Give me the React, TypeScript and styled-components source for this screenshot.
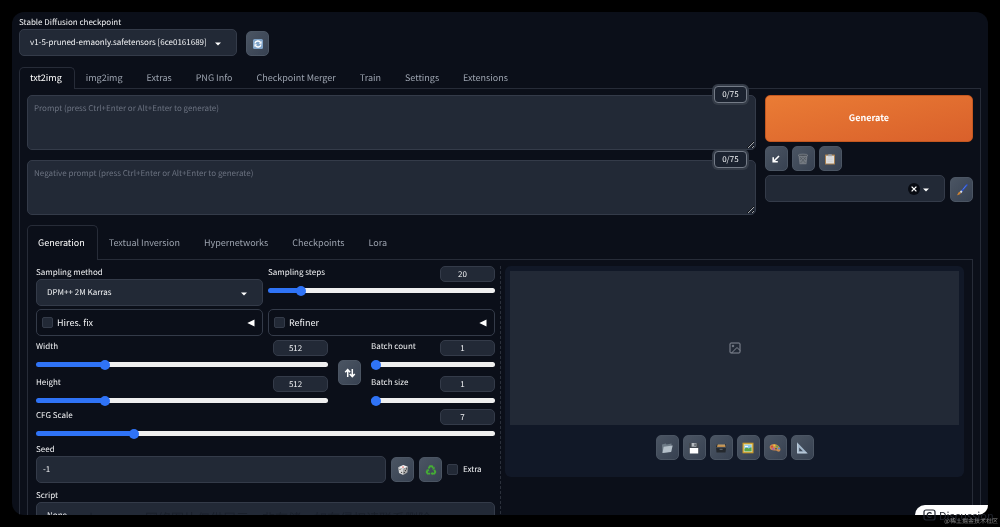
import React from "react";
import styled, { createGlobalStyle } from "styled-components";

const Global = createGlobalStyle`
  * { box-sizing: border-box; }
  html, body { margin: 0; background: #000; text-rendering: geometricPrecision; }
  body, button, input, textarea, select {
    font-family: "Noto Sans CJK SC", "Source Sans Pro", sans-serif;
    text-rendering: geometricPrecision;
    color: #f3f4f6;
  }
  h1, h2, p { margin: 0; }
`;

const line = "#272c38";
const field = "#222936";
const edge = "#343b49";

const Screen = styled.div`
  height: 100vh;
  padding: 12px;
  position: relative;
  overflow: hidden;
`;
const Win = styled.main`
  height: 100%;
  background: #0b0f19;
  border-radius: 12px;
  overflow: hidden;
  padding: 4px 7px 0;
`;
const Label = styled.label`
  display: block;
  font-size: 8px;
  line-height: 13px;
  white-space: nowrap;
`;
const Row = styled.div<{ $gap?: number; $align?: string; $top?: number }>`
  display: flex;
  gap: ${(p) => p.$gap ?? 5}px;
  align-items: ${(p) => p.$align ?? "flex-start"};
  margin-top: ${(p) => p.$top ?? 0}px;
`;
const Grow = styled.div`
  flex: 1;
  min-width: 0;
`;
const SelectBox = styled.div<{ $width?: number }>`
  position: relative;
  width: ${(p) => (p.$width ? `${p.$width}px` : "100%")};
  select {
    appearance: none;
    display: block;
    width: 100%;
    height: 27px;
    padding: 0 20px 0 10px;
    font-size: 8px;
    background: ${field};
    border: 1px solid ${edge};
    border-radius: 5px;
  }
`;
const Caret = styled.svg`
  position: absolute;
  right: 16px;
  top: 13px;
  width: 6px;
  height: 4px;
  fill: #fff;
  pointer-events: none;
`;
const Tool = styled.button`
  flex: none;
  width: 23px;
  height: 25px;
  padding: 0;
  display: grid;
  place-items: center;
  border: 1px solid #4b5563;
  border-radius: 5px;
  background: linear-gradient(to bottom right, #4b5563, #374151);
  svg { width: 12px; height: 12px; display: block; }
`;
const Tabs = styled.nav<{ $top: number }>`
  display: flex;
  margin-top: ${(p) => p.$top}px;
`;
const Tab = styled.button<{ $on?: boolean; $tall?: boolean }>`
  height: ${(p) => (p.$tall ? 35 : 22)}px;
  margin-bottom: -1px;
  padding: 0 12px ${(p) => (p.$tall ? 0 : 2)}px 10px;
  font-size: 9px;
  line-height: 14px;
  white-space: nowrap;
  position: relative;
  color: ${(p) => (p.$on ? "#fff" : "#9ca3af")};
  background: ${(p) => (p.$on ? "#0b0f19" : "transparent")};
  border: 1px solid ${(p) => (p.$on ? line : "transparent")};
  border-bottom: 0;
  border-radius: 5px 5px 0 0;
`;
const Panel = styled.section<{ $inner?: boolean }>`
  border: 1px solid ${line};
  padding: 6px ${(p) => (p.$inner ? 8 : 7)}px 40px;
`;
const PromptWrap = styled.div`
  position: relative;
  textarea {
    display: block;
    width: 100%;
    height: 55px;
    padding: 6px;
    font-size: 8px;
    line-height: 13px;
    background: ${field};
    border: 1px solid ${edge};
    border-radius: 5px;
  }
  textarea::placeholder { color: #6b7280; }
  & + & { margin-top: 10px; }
`;
const Counter = styled.span`
  position: absolute;
  top: -9px;
  right: 9px;
  width: 33px;
  height: 17px;
  font-size: 8px;
  line-height: 15px;
  text-align: center;
  background: #1b222f;
  border: 1px solid #747b87;
  border-radius: 4px;
  box-shadow: 0 0 0 2px #343b47;
`;
const Side = styled.div`
  width: 22%;
  flex: none;
`;
const Generate = styled.button`
  display: block;
  width: 100%;
  height: 47px;
  padding: 0 0 2px;
  font-size: 9px;
  font-weight: 700;
  color: #fff;
  border: 1px solid #c4571f;
  border-radius: 5px;
  background: linear-gradient(to bottom right, #ea7c35, #d9602b);
`;
const Clear = styled.button`
  position: absolute;
  right: 25px;
  top: 8px;
  width: 12px;
  height: 12px;
  padding: 0;
  border: 0;
  border-radius: 50%;
  background: #080b12;
  svg { display: block; width: 12px; height: 12px; }
`;
const Columns = styled.div`
  display: grid;
  grid-template-columns: 1fr 10px 1fr;
`;
const Split = styled.div`
  width: 1px;
  margin-left: 5px;
  border-left: 1px dashed #2b303b;
`;
const Half = styled.div`
  display: grid;
  grid-template-columns: 1fr 1fr;
  gap: 3px 5px;
`;
const Fold = styled.div`
  display: flex;
  align-items: center;
  height: 27px;
  padding: 0 7px 0 5px;
  border: 1px solid ${edge};
  border-radius: 5px;
  label { flex: 1; font-size: 9px; line-height: 14px; margin-left: 4px; }
  svg { width: 8px; height: 8px; fill: #fff; }
`;
const Check = styled.input.attrs({ type: "checkbox" })`
  appearance: none;
  flex: none;
  width: 11px;
  height: 11px;
  margin: 0;
  background: ${field};
  border: 1px solid ${edge};
  border-radius: 2px;
`;
const SliderBox = styled.div`
  height: 29px;
`;
const Stack = styled.div`
  display: flex;
  flex-direction: column;
  gap: 7px;
`;
const SliderHead = styled.div`
  display: flex;
  justify-content: space-between;
  height: 19px;
`;
const NumberBox = styled.input`
  width: 55px;
  height: 16px;
  padding: 0 10px 0 0;
  text-align: center;
  font-size: 8px;
  line-height: 14px;
  background: ${field};
  border: 1px solid ${edge};
  border-radius: 5px;
`;
const Range = styled.input.attrs({ type: "range" })<{ $fill: string }>`
  appearance: none;
  display: block;
  width: 100%;
  height: 10px;
  margin: 0;
  background: transparent;
  &::-webkit-slider-runnable-track {
    height: 5px;
    border-radius: 3px;
    background: linear-gradient(to right, #2f73f6 ${(p) => p.$fill}, #efefef ${(p) => p.$fill});
  }
  &::-webkit-slider-thumb {
    appearance: none;
    width: 10px;
    height: 10px;
    margin-top: -2px;
    border-radius: 50%;
    background: #2f73f6;
  }
`;
const SeedInput = styled.input`
  display: block;
  flex: 1;
  min-width: 0;
  height: 27px;
  padding: 0 6px;
  font-size: 8px;
  background: ${field};
  border: 1px solid ${edge};
  border-radius: 5px;
`;
const BatchCol = styled(Stack)`
  width: 27%;
  flex: none;
`;
const SizeCol = styled(Stack)`
  flex: 1;
  min-width: 0;
`;
const Spaced = styled.div<{ $top: number }>`
  margin-top: ${(p) => p.$top}px;
`;
const Extra = styled(Label)`
  width: 32px;
`;
const Gallery = styled.div`
  height: 211px;
  padding: 5px;
  background: #111827;
  border-radius: 6px;
`;
const Preview = styled.div`
  height: 154px;
  display: grid;
  place-items: center;
  background: ${field};
  svg { width: 12px; height: 12px; stroke: #858b96; fill: none; }
`;
const Actions = styled.div`
  display: flex;
  justify-content: center;
  gap: 4px;
  margin-top: 10px;
`;
const Discuss = styled.a`
  position: absolute;
  right: 12px;
  bottom: 12px;
  width: 73px;
  height: 10px;
  padding: 4px 0 0 8px;
  display: flex;
  gap: 3px;
  background: #fff;
  border-radius: 12px 0 12px 0;
  color: #20242e;
  font-size: 11px;
  line-height: 14px;
  text-decoration: none;
  svg { width: 13px; height: 12px; flex: none; }
`;
const Notice = styled.p`
  position: absolute;
  left: 50px;
  bottom: 0;
  font-size: 13px;
  line-height: 18px;
  white-space: nowrap;
  color: #1a202b;
  mix-blend-mode: darken;
`;
const Credit = styled.p`
  position: absolute;
  right: 2px;
  bottom: 2px;
  font-size: 6px;
  line-height: 9px;
  color: #8d8d8d;
`;

function Drop({ id, options, width }: { id: string; options: string[]; width?: number }) {
  return (
    <SelectBox $width={width}>
      <select id={id}>
        {options.map((o) => <option key={o}>{o}</option>)}
      </select>
      <Caret viewBox="0 0 6 4"><path d="M0 .5h6L3 3.5z" /></Caret>
    </SelectBox>
  );
}

function Slider({ id, label, value, min, max }: { id: string; label: string; value: number; min: number; max: number }) {
  const r = (value - min) / (max - min);
  return (
    <SliderBox>
      <SliderHead>
        <Label htmlFor={id}>{label}</Label>
        <NumberBox aria-label={`${label} value`} defaultValue={value} />
      </SliderHead>
      <Range id={id} min={min} max={max} defaultValue={value} $fill={`calc(5px + (100% - 10px) * ${r})`} />
    </SliderBox>
  );
}

const Refresh = () => (
  <svg viewBox="0 0 12 12"><rect x="1" y="1" width="10" height="10" rx="1.5" fill="#7fa3c8" /><path d="M3 5.5A3 3 0 0 1 8.6 4.6M9 6.5A3 3 0 0 1 3.4 7.4" stroke="#fff" strokeWidth="1.4" fill="none" /><path d="M9.6 3v2.8H6.9zM2.4 9V6.2h2.7z" fill="#fff" /></svg>
);
const ArrowDL = () => (
  <svg viewBox="0 0 12 12"><path d="M9 3 3.5 8.5M3.2 4.2v4.6h4.6" stroke="#fff" strokeWidth="1.6" fill="none" /></svg>
);
const Trash = () => (
  <svg viewBox="0 0 12 12"><path d="M1.500 2.500h9L9.500 11.300h-7z" fill="#737981" /><path d="M3 4l5.5 6M5.5 3l3.5 4M9 4l-5.5 6M6.5 3L3 7" stroke="#4a5058" strokeWidth=".6" /><ellipse cx="6" cy="2.3" rx="4.8" ry="1.200" fill="#4a5058" stroke="#8a9098" strokeWidth=".6" /></svg>
);
const Clip = () => (
  <svg viewBox="0 0 12 12"><rect x="1" y="1.500" width="10" height="10" rx=".6" fill="#a88050" /><path d="M2 2.700h8v7.800H2z" fill="#dedede" /><path d="M3.5 5h5M3.5 6.7h5M3.5 8.4h5" stroke="#c4c7ca" strokeWidth=".5" /><path d="M4 1.5h1.2a.9.9 0 0 1 1.6 0H8v1.7H4z" fill="#9ba1a8" /></svg>
);
const Brush = () => (
  <svg viewBox="0 0 12 12"><path d="M10.8 1 5.2 7.8" stroke="#2b4fc4" strokeWidth="1.8" strokeLinecap="round" /><path d="M10.3 1.3 6.8 5.5" stroke="#6f93ee" strokeWidth=".6" /><path d="M5.8 7 4.4 8.6" stroke="#d8dce2" strokeWidth="1.9" /><path d="M3.7 7.8 4.9 9C4.4 10.5 2.7 11 1 11.2c.9-1.200 1-3 2.700-3.400z" fill="#c98235" /></svg>
);
const Swap = () => (
  <svg viewBox="0 0 12 12"><path d="M3.7 10V3M1.2 5.200l2.500-2.700L6.200 5.200M8.300 2v7M5.800 6.900l2.500 2.700 2.500-2.700" stroke="#fff" strokeWidth="1.500" fill="none" /></svg>
);
const Dice = () => (
  <svg viewBox="0 0 12 12"><path d="M1.200 3.200 6.200 1l4.800 1.800L6 5z" fill="#f4f4f4" /><path d="M1.200 3.200 6 5l.2 6-4.200-2z" fill="#d6d6d6" /><path d="M11 2.800 6 5l.2 6 4.200-2.400z" fill="#a9a9a9" /><ellipse cx="6" cy="3" rx="1.100" ry=".6" fill="#d44" /><circle cx="3" cy="5.500" r=".6" fill="#444" /><circle cx="4.600" cy="8.400" r=".6" fill="#444" /><circle cx="9.600" cy="4.800" r=".6" fill="#222" /><circle cx="8.400" cy="6.600" r=".6" fill="#222" /><circle cx="7.300" cy="8.600" r=".6" fill="#222" /></svg>
);
const Recycle = () => (
  <svg viewBox="0 0 12 12" fill="none" stroke="#45ad35" strokeWidth="1.900"><path d="M3.500 4.600 5 2.200h2L8.200 4" /><path d="M9.300 5.800 10.300 8l-.9 1.600H6.800" /><path d="M5.200 9.600H2.600L1.700 8l1-1.800" /><path d="M9.600 2.600v2.800H7zM7.500 7.800v3.400L5.700 9.600zM1 5.900l2.600-.9.800 2.500z" fill="#45ad35" stroke="none" /></svg>
);
const Folder = () => (
  <svg viewBox="0 0 12 12"><path d="M1 2.500 4.800 1.600l.8 1L10.500 1.500l.2 8L1.400 11z" fill="#6e7b87" /><path d="M2.700 4.700 11.700 3.400 10 10l-8.500 1z" fill="#b4bfc9" /></svg>
);
const Floppy = () => (
  <svg viewBox="0 0 12 12"><path d="M1 1h9.300l.7.700V11H1z" fill="#424850" /><path d="M3.600 1h4.800v3.700H3.600z" fill="#b5babf" /><path d="M6.500 1.600h1.100v2.500H6.500z" fill="#3c4249" /><path d="M1.800 6h8.400v5.500H1.800z" fill="#fff" /></svg>
);
const CardBox = () => (
  <svg viewBox="0 0 12 12"><path d="M2 2h8.500l.7 3-.7 5.500H1.500L1 5z" fill="#24282d" /><path d="M2.500 3h7.700l.4 2H2z" fill="#bf8d4d" /><path d="M2.500 2.500h7.500v.7H2.500z" fill="#e4c89b" /><path d="M1.300 5.600h9.700" stroke="#59616a" strokeWidth=".7" /><path d="M4.600 7.300h3" stroke="#777f87" strokeWidth=".8" /></svg>
);
const Framed = () => (
  <svg viewBox="0 0 12 12"><path d="M.5.700h11v10.600H.5z" fill="#c99a2c" /><path d="M1.700 1.900h8.600v8.200H1.700z" fill="#ead98f" /><path d="M2.500 2.700h7v6.600h-7z" fill="#8dcaef" /><path d="M2.500 7c2-2 3-1 4-.4 1-.9 2-1.200 3-1.200v3.900h-7z" fill="#5aa544" /><path d="M3 4.400h3" stroke="#fff" /></svg>
);
const Palette = () => (
  <svg viewBox="0 0 12 12"><path d="M.7 4.800C1.200 1.800 6 1.300 9 3.400c3 2.100 3.200 5.600.8 6.200-1.500.3-1.700-1.300-3-1.200C3.300 8.800.4 7.700.7 4.800z" fill="#c98a50" /><circle cx="3" cy="4.700" r="1" fill="#d84237" /><circle cx="5.300" cy="3.500" r="1" fill="#edc63b" /><circle cx="8" cy="4.400" r="1" fill="#56b043" /><circle cx="10" cy="6.400" r="1" fill="#3f8ee0" /><circle cx="4.300" cy="7" r="1" fill="#a253c4" /><ellipse cx="7" cy="6.700" rx="1" ry=".7" fill="#454d59" /></svg>
);
const SetSquare = () => (
  <svg viewBox="0 0 12 12"><path fillRule="evenodd" d="M1 .3 11.800 11.500H1zM3.200 5.500v3.800h3.700z" fill="#a3b7cb" /><path d="M1.600 1.800v9h8.900" stroke="#dce6ef" strokeWidth=".5" fill="none" /></svg>
);
const FoldArrow = () => <svg viewBox="0 0 8 8"><path d="M7.500 .5v7L.3 4z" /></svg>;

export default function App() {
  return (
    <Screen>
      <Global />
      <Win>
        <Row $gap={9} $align="flex-end">
          <div>
            <Label htmlFor="ckpt">Stable Diffusion checkpoint</Label>
            <Drop id="ckpt" width={218} options={["v1-5-pruned-emaonly.safetensors [6ce0161689]"]} />
          </div>
          <Tool aria-label="Refresh"><Refresh /></Tool>
        </Row>
        <Tabs $top={11}>
          {["txt2img", "img2img", "Extras", "PNG Info", "Checkpoint Merger", "Train", "Settings", "Extensions"].map((t, i) => (
            <Tab key={t} $on={i === 0}>{t}</Tab>
          ))}
        </Tabs>
        <Panel>
          <Row $gap={9}>
            <Grow>
              <PromptWrap>
                <textarea aria-label="Prompt" placeholder="Prompt (press Ctrl+Enter or Alt+Enter to generate)" />
                <Counter>0/75</Counter>
              </PromptWrap>
              <PromptWrap>
                <textarea aria-label="Negative prompt" placeholder="Negative prompt (press Ctrl+Enter or Alt+Enter to generate)" />
                <Counter>0/75</Counter>
              </PromptWrap>
            </Grow>
            <Side>
              <Generate>Generate</Generate>
              <Row $gap={4} $top={4}>
                <Tool aria-label="Read last parameters"><ArrowDL /></Tool>
                <Tool aria-label="Clear prompt"><Trash /></Tool>
                <Tool aria-label="Apply styles"><Clip /></Tool>
              </Row>
              <Row $top={4} $align="flex-end">
                <SelectBox>
                  <select aria-label="Styles"><option></option></select>
                  <Clear aria-label="Clear styles"><svg viewBox="0 0 11 11"><path d="M3.300 3.300l4.400 4.400M7.700 3.300 3.300 7.700" stroke="#fff" strokeWidth="1.200" /></svg></Clear>
                  <Caret viewBox="0 0 6 4"><path d="M0 .5h6L3 3.500z" /></Caret>
                </SelectBox>
                <Tool aria-label="Edit styles"><Brush /></Tool>
              </Row>
            </Side>
          </Row>
          <Tabs $top={10}>
            {["Generation", "Textual Inversion", "Hypernetworks", "Checkpoints", "Lora"].map((t, i) => (
              <Tab key={t} $tall $on={i === 0}>{t}</Tab>
            ))}
          </Tabs>
          <Panel $inner>
            <Columns>
              <div>
                <Half>
                  <div>
                    <Label htmlFor="sampler">Sampling method</Label>
                    <Drop id="sampler" options={["DPM++ 2M Karras"]} />
                  </div>
                  <Slider id="steps" label="Sampling steps" value={20} min={1} max={150} />
                  <Fold><Check id="hires" /><label htmlFor="hires">Hires. fix</label><FoldArrow /></Fold>
                  <Fold><Check id="refiner" /><label htmlFor="refiner">Refiner</label><FoldArrow /></Fold>
                </Half>
                <Row $gap={10} $align="center" $top={4}>
                  <SizeCol>
                    <Slider id="w" label="Width" value={512} min={64} max={2048} />
                    <Slider id="h" label="Height" value={512} min={64} max={2048} />
                  </SizeCol>
                  <Tool aria-label="Swap width and height"><Swap /></Tool>
                  <BatchCol>
                    <Slider id="bc" label="Batch count" value={1} min={1} max={100} />
                    <Slider id="bs" label="Batch size" value={1} min={1} max={8} />
                  </BatchCol>
                </Row>
                <Spaced $top={4}>
                  <Slider id="cfg" label="CFG Scale" value={7} min={1} max={30} />
                </Spaced>
                <Spaced $top={5}>
                  <Label htmlFor="seed">Seed</Label>
                </Spaced>
                <Row $align="center">
                  <SeedInput id="seed" defaultValue="-1" />
                  <Tool aria-label="Random seed"><Dice /></Tool>
                  <Tool aria-label="Reuse seed"><Recycle /></Tool>
                  <Check id="extra" />
                  <Extra htmlFor="extra">Extra</Extra>
                </Row>
                <Spaced $top={6}>
                  <Label htmlFor="script">Script</Label>
                </Spaced>
                <Drop id="script" options={["None"]} />
              </div>
              <Split />
              <Gallery>
                <Preview>
                  <svg viewBox="0 0 12 12"><rect x="1" y="1" width="10" height="10" rx="1" /><circle cx="4" cy="4" r=".8" /><path d="M2.500 11 8 5.500l3 3" /></svg>
                </Preview>
                <Actions>
                  <Tool aria-label="Open folder"><Folder /></Tool>
                  <Tool aria-label="Save"><Floppy /></Tool>
                  <Tool aria-label="Save zip"><CardBox /></Tool>
                  <Tool aria-label="Send to img2img"><Framed /></Tool>
                  <Tool aria-label="Send to inpaint"><Palette /></Tool>
                  <Tool aria-label="Send to extras"><SetSquare /></Tool>
                </Actions>
              </Gallery>
            </Columns>
          </Panel>
        </Panel>
      </Win>
      <Notice>toymoban.com 网络图片仅供展示，非存储，如有侵权请联系删除。</Notice>
      <Discuss href="#discuss">
        <svg viewBox="0 0 13 12" fill="none" stroke="#20242e" strokeWidth="1.200"><rect x="1" y="1" width="11" height="10" rx="2" /><path d="M8.500 4.500a2.400 2.400 0 1 0 0 3" /></svg>
        Discussion
      </Discuss>
      <Credit>@稀土掘金技术社区</Credit>
    </Screen>
  );
}
